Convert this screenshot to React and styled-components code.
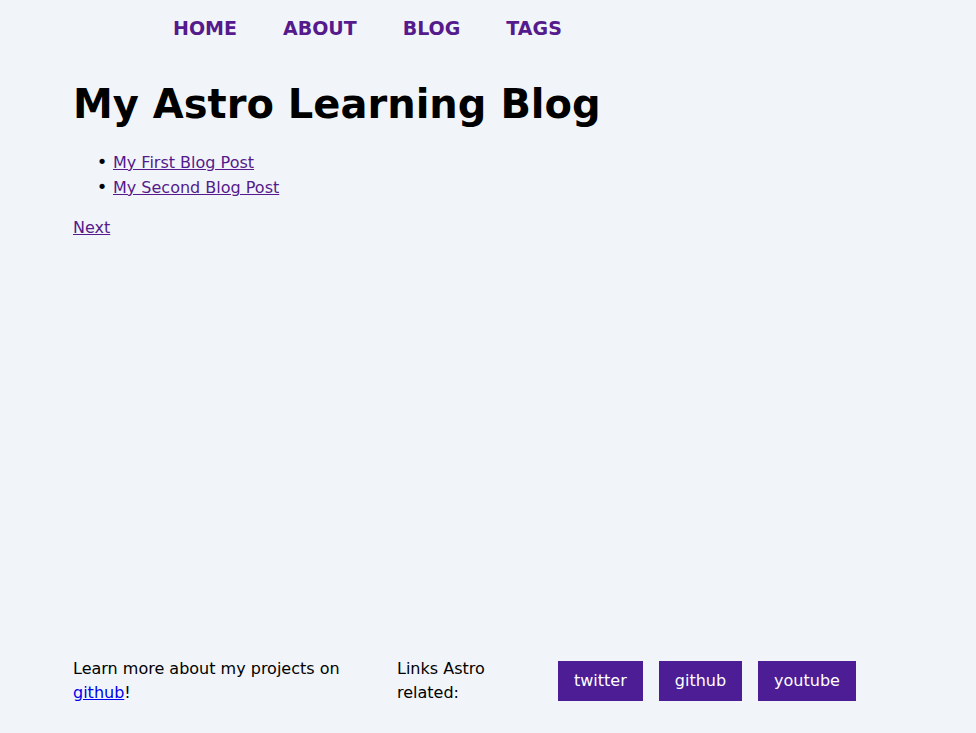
import React from "react";
import styled, { createGlobalStyle } from "styled-components";

const GlobalStyle = createGlobalStyle`
  body {
    margin: 0;
    background: #f1f5f9;
    color: #000;
    font: 16px/24px "DejaVu Sans", sans-serif;
  }
`;

const Page = styled.div`
  box-sizing: border-box;
  display: flex;
  flex-direction: column;
  min-height: 100vh;
  max-width: 1280px;
  padding: 14px 73px 28px;
`;

const Nav = styled.nav`
  display: flex;
  gap: 46px;
  padding-left: 100px;
`;

const NavLink = styled.a`
  color: #551a8b;
  font-size: 19px;
  line-height: 28px;
  font-weight: 700;
  text-decoration: none;
  text-transform: uppercase;
`;

const Main = styled.main`
  flex: 1;
`;

const Title = styled.h1`
  margin: 32px 0 16px;
  font-size: 40px;
  line-height: 60px;
`;

const PostList = styled.ul`
  margin: 0 0 16px;
  padding-left: 40px;
`;

const PostItem = styled.li`
  &::marker {
    content: "• ";
    font-size: 18px;
  }
`;

const TextLink = styled.a`
  color: ${({ $visited }) => ($visited ? "#551a8b" : "#0000ee")};
  text-decoration: underline;
`;

const Footer = styled.footer`
  display: flex;
  align-items: center;
  gap: 48px;
`;

const Note = styled.p`
  width: 276px;
  margin: 0;
`;

const Related = styled.div`
  display: flex;
  align-items: center;
  gap: 16px;
`;

const RelatedLabel = styled.p`
  width: 145px;
  margin: 0;
`;

const SocialLink = styled.a`
  padding: 8px 16px;
  background: #4c1d95;
  color: #fff;
  text-decoration: none;
`;

const sections = ["Home", "About", "Blog", "Tags"];
const posts = ["My First Blog Post", "My Second Blog Post"];
const platforms = ["twitter", "github", "youtube"];

export default function App() {
  return (
    <>
      <GlobalStyle />
      <Page>
        <Nav>
          {sections.map((name) => (
            <NavLink key={name} href={`#${name.toLowerCase()}`}>{name}</NavLink>
          ))}
        </Nav>
        <Main>
          <Title>My Astro Learning Blog</Title>
          <PostList>
            {posts.map((post, index) => (
              <PostItem key={post}>
                <TextLink $visited href={`#post-${index + 1}`}>{post}</TextLink>
              </PostItem>
            ))}
          </PostList>
          <TextLink $visited href="#next">Next</TextLink>
        </Main>
        <Footer>
          <Note>
            Learn more about my projects on <TextLink href="#github">github</TextLink>!
          </Note>
          <Related>
            <RelatedLabel>Links Astro related:</RelatedLabel>
            {platforms.map((platform) => (
              <SocialLink key={platform} href={`#${platform}`}>{platform}</SocialLink>
            ))}
          </Related>
        </Footer>
      </Page>
    </>
  );
}
